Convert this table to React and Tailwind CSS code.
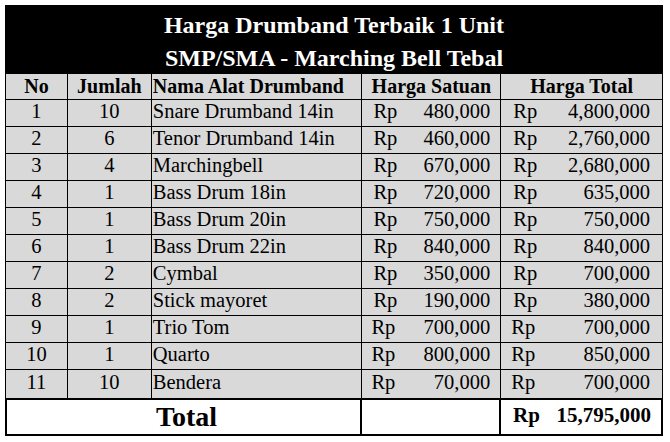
import React from 'react';

// price table rows, straight from the sheet
const rows = [
  { no: 1, qty: 10, name: 'Snare Drumband 14in', unit: '480,000', total: '4,800,000' },
  { no: 2, qty: 6, name: 'Tenor Drumband 14in', unit: '460,000', total: '2,760,000' },
  { no: 3, qty: 4, name: 'Marchingbell', unit: '670,000', total: '2,680,000' },
  { no: 4, qty: 1, name: 'Bass Drum 18in', unit: '720,000', total: '635,000' },
  { no: 5, qty: 1, name: 'Bass Drum 20in', unit: '750,000', total: '750,000' },
  { no: 6, qty: 1, name: 'Bass Drum 22in', unit: '840,000', total: '840,000' },
  { no: 7, qty: 2, name: 'Cymbal', unit: '350,000', total: '700,000' },
  { no: 8, qty: 2, name: 'Stick mayoret', unit: '190,000', total: '380,000' },
  { no: 9, qty: 1, name: 'Trio Tom', unit: '700,000', total: '700,000', shift: true },
  { no: 10, qty: 1, name: 'Quarto', unit: '800,000', total: '850,000', shift: true },
  { no: 11, qty: 10, name: 'Bendera', unit: '70,000', total: '700,000', shift: true },
];

const HeaderRow = () => (
  <div className="flex h-[26px] border-b border-l border-black bg-[#d9d9d9] font-bold text-[20px]">
    <div className="w-[62px] border-r border-black flex items-center justify-center pb-[1px]">No</div>
    <div className="w-[84px] border-r border-black flex items-center justify-center pb-[1px]">Jumlah</div>
    <div className="w-[211px] border-r border-black flex items-center pl-[1px] pb-[1px]">Nama Alat Drumband</div>
    <div className="w-[139px] border-r border-black flex items-center justify-center pb-[1px]">Harga Satuan</div>
    <div className="w-[162px] border-r border-black flex items-center justify-center pb-[1px]">Harga Total</div>
  </div>
);

const DataRow = ({ row, last }) => (
  <div className={`flex border-l border-black bg-[#d9d9d9] text-[20.5px] ${last ? 'h-[28px]' : 'h-[27px] border-b'}`}>
    <div className="w-[62px] border-r border-black flex items-center justify-center pb-[3px]">{row.no}</div>
    <div className="w-[84px] border-r border-black flex items-center justify-center pb-[3px]">{row.qty}</div>
    <div className="w-[211px] border-r border-black flex items-center pl-[1px] pb-[3px]">{row.name}</div>
    <div className={`w-[139px] border-r border-black flex items-center justify-between pr-[10px] pb-[3px] ${row.shift ? 'pl-[9px]' : 'pl-[11px]'}`}>
      <span>Rp</span>
      <span>{row.unit}</span>
    </div>
    <div className={`w-[162px] border-r border-black flex items-center justify-between pr-[12px] pb-[3px] ${row.shift ? 'pl-[10px]' : 'pl-[12px]'}`}>
      <span>Rp</span>
      <span>{row.total}</span>
    </div>
  </div>
);

function App() {
  return (
    <div className="w-[670px] h-[442px] bg-white pt-[5px] pl-[5px] font-['Liberation_Serif',serif] text-black">
      <div className="w-[658px]">
        {/* title block */}
        <div className="h-[69px] bg-black text-white font-bold text-[24px] flex flex-col">
          <div className="h-[36px] flex items-center justify-center pt-[4px]">Harga Drumband Terbaik 1 Unit</div>
          <div className="h-[33px] flex items-center justify-center pt-[1px]">SMP/SMA - Marching Bell Tebal</div>
        </div>

        <HeaderRow />
        {rows.map((row, i) => (
          <DataRow key={row.no} row={row} last={i === rows.length - 1} />
        ))}

        {/* total row */}
        <div className="flex h-[38px] border-2 border-black bg-white font-bold">
          <div className="w-[355px] border-r-2 border-black flex items-center justify-center text-[28px] pl-[6px]">Total</div>
          <div className="w-[139px] border-r-2 border-black"></div>
          <div className="flex-1 flex items-center justify-between pl-[12px] pr-[10px] text-[21px] pb-[2px]">
            <span>Rp</span>
            <span>15,795,000</span>
          </div>
        </div>
      </div>
    </div>
  );
}

export default App;
